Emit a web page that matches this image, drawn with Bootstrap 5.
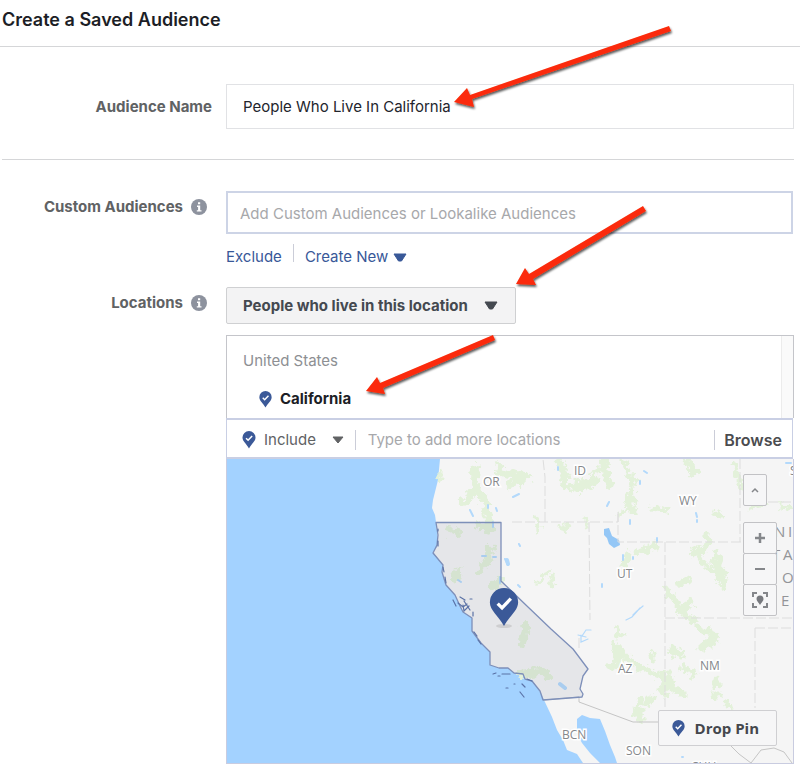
<!DOCTYPE html>
<html lang="en">
<head>
<meta charset="utf-8">
<meta name="viewport" content="width=device-width, initial-scale=1">
<title>Create a Saved Audience</title>
<link href="https://cdn.jsdelivr.net/npm/bootstrap@5.3.0/dist/css/bootstrap.min.css" rel="stylesheet">
<style>
body{font-family:Inter,"Liberation Sans",sans-serif;font-size:15px;line-height:24px;color:#1d2129;background:#fff}
.page-title{font-size:18px;line-height:24px;font-weight:600;padding:8px 2px 14px;border-bottom:1px solid #d5d6d8;color:#1c1e26}
.name-section{padding:37px 0 30px;margin:0 6px 0 2px;border-bottom:1px solid #d5d6d8}
.name-section .field-label{width:210px;margin-right:14px}
.field-row{margin-right:6px}
.custom-row{padding-top:31px}
.field-label{flex:none;text-align:right;font-weight:700;color:#606264}
.info-label{width:207px;margin-right:19px;padding-top:4px}
.field-box,.field-box:focus{border:1px solid #e1e2e5;border-radius:0;padding:10px 16px 9px;font-size:15px;line-height:24px;color:#23252d;background:#fff;box-shadow:none}
.field-blue,.field-blue:focus{border:2px solid #cdd4e6;padding:9px 12px 6px}
.custom-col{margin-right:1px}
.form-control::placeholder{color:#a7a8ab;opacity:1}
.links-line{padding-top:10px;margin-bottom:20px;gap:11px}
.link-blue,.link-blue:hover{color:#385898;text-decoration:none;line-height:20px;font-size:15px}
.links-line .link-blue{margin-top:3px}
.links-line .v-rule{height:18px;align-self:flex-start}
.v-rule{width:1px;background:#cbcdd8}
.pick{appearance:none;cursor:pointer;background-repeat:no-repeat}
.pick-type{border:1px solid #cfd0d2;border-radius:2px;font-weight:700;font-size:15px;line-height:24px;color:#444950;padding:6px 47px 5px 16px;margin-bottom:11px;background-color:#f3f3f4;background-position:right 17px center;background-size:14px 9px;background-image:url("data:image/svg+xml,%3Csvg xmlns='http://www.w3.org/2000/svg' viewBox='0 0 14 9'%3E%3Cpath d='M1 1h12L8.500 8h-3z' fill='%23444950' stroke='%23444950' stroke-linejoin='round'/%3E%3C/svg%3E")}
.pick-mode{border:0;background-color:transparent;font-size:15px;line-height:24px;color:#606264;padding:0 28px 0 0;background-position:right 0 center;background-size:12px 8px;background-image:url("data:image/svg+xml,%3Csvg xmlns='http://www.w3.org/2000/svg' viewBox='0 0 12 8'%3E%3Cpath d='M1 1h10L6 7z' fill='%23606264' stroke='%23606264' stroke-linejoin='round'/%3E%3C/svg%3E")}
.chosen{border:1px solid #c4c5ca;border-bottom:0}
.chosen-list{padding:13px 0 7px 16px}
.country{color:#8d8f93}
.state{font-weight:700;color:#1c1e26;margin-top:14px;padding-left:16px;gap:8px}
.scroll-track{width:12px;background:#fafafa;border-left:1px solid #ececec}
.adder{border:1px solid #c9cfe4;border-top-width:2px;border-bottom-width:2px;margin-right:1px;padding:8px 10px 5px 15px}
.adder .form-control{border:0;padding:0 12px;font-size:15px;line-height:24px;box-shadow:none;background:none}
.adder .v-rule{height:20px}
.adder .v-rule-first{margin-left:11px}
.browse-btn,.browse-btn:hover{font-weight:600;color:#4b4c4f;padding:0 0 0 10px;border:0;font-size:16px;line-height:24px}
.map-frame{border:1px solid #c9cce0;border-top:0;background:#a3d2ff}
.map-frame text{font-family:"Open Sans","Noto Sans",sans-serif;fill:#85878b;stroke:#fff;stroke-width:3px;paint-order:stroke;font-size:12px}
.map-frame .region-name{font-size:15px;stroke:none;fill:#929498}
.map-ui{inset:15px 16px 17px auto;pointer-events:none}
.map-ui button{pointer-events:auto}
.map-btn,.map-btn:hover{border:1px solid #c2c2c5;border-radius:2px;background:#f6f6f7;padding:0;width:34px;height:32px;color:#85878b}
.map-btn+.map-btn{margin-top:-1px}
.map-btn.narrow{width:24px;margin-right:10px;margin-bottom:17px}
.pin-btn,.pin-btn:hover{border:1px solid #cfcfd2;border-radius:2px;background:#f6f6f7;font:700 15px/24px "Open Sans","Noto Sans",sans-serif;color:#44474d;padding:5px 17px 5px 13px;gap:10px}
.callouts{left:0;top:0;z-index:5;pointer-events:none}
svg{flex:none}
</style>
</head>
<body class="position-relative">
<svg width="0" height="0" class="position-absolute" aria-hidden="true">
  <symbol id="pin" viewBox="0 0 30 40"><path d="M15 0a14.500 14.500 0 0 1 14.500 14.500C29.500 23 21 28 15 39 9 28 .5 23 .5 14.500A14.500 14.500 0 0 1 15 0z" fill="#3b5998"/><path d="M8.500 16l4.500 4.500 9-9.500" fill="none" stroke="#fff" stroke-width="3.400"/></symbol>
  <symbol id="info" viewBox="0 0 16 16"><circle cx="8" cy="8" r="8" fill="#8d929e"/><path d="M6 6.500h3.200v4.700h1.300v1.400H5.800v-1.400h1.300V7.900H6zM7 3.200h2.200v2.100H7z" fill="#fff"/></symbol>
</svg>

<header><h1 class="page-title mb-0">Create a Saved Audience</h1></header>
<main>
  <section class="name-section d-flex align-items-center">
    <label class="field-label" for="aud-name">Audience Name</label>
    <input id="aud-name" class="form-control field-box" type="text" value="People Who Live In California">
  </section>

  <section class="field-row custom-row d-flex">
    <div class="field-label info-label d-flex justify-content-end align-items-start">
      <label for="custom-aud">Custom Audiences</label>
      <svg class="ms-2 mt-1" width="16" height="16" aria-hidden="true"><use href="#info"/></svg>
    </div>
    <div class="flex-grow-1 custom-col">
      <input id="custom-aud" class="form-control field-box field-blue" type="text" placeholder="Add Custom Audiences or Lookalike Audiences">
      <div class="links-line d-flex">
        <a class="link-blue" href="#">Exclude</a>
        <span class="v-rule"></span>
        <button type="button" class="btn link-blue border-0 p-0">Create New <svg width="14" height="9" viewBox="0 0 14 9" aria-hidden="true"><path d="M1 1h12L8.500 8h-3z" fill="#385898" stroke="#385898" stroke-linejoin="round"/></svg></button>
      </div>
    </div>
  </section>

  <section class="field-row d-flex">
    <div class="field-label info-label d-flex justify-content-end align-items-start">
      <label for="loc-type">Locations</label>
      <svg class="ms-2 mt-1" width="16" height="16" aria-hidden="true"><use href="#info"/></svg>
    </div>
    <div class="flex-grow-1">
      <select id="loc-type" class="pick pick-type d-block"><option>People who live in this location</option></select>
      <div class="chosen d-flex">
        <div class="chosen-list flex-grow-1">
          <div class="country">United States</div>
          <div class="state d-flex align-items-center"><svg width="13" height="17" aria-hidden="true"><use href="#pin"/></svg>California</div>
        </div>
        <div class="scroll-track"></div>
      </div>
      <div class="adder d-flex align-items-center">
        <svg class="me-2" width="14" height="18" aria-hidden="true"><use href="#pin"/></svg>
        <select class="pick pick-mode" aria-label="Include or exclude"><option>Include</option></select>
        <span class="v-rule v-rule-first"></span>
        <input class="form-control" type="text" aria-label="Add locations" placeholder="Type to add more locations">
        <span class="v-rule"></span>
        <button type="button" class="btn browse-btn">Browse</button>
      </div>
      <div class="map-frame position-relative">
        <svg class="d-block w-100" viewBox="227 459 566 304" role="img" aria-label="Map of California">
          <defs>
            <filter id="rough" x="-5%" y="-5%" width="110%" height="110%"><feTurbulence type="fractalNoise" baseFrequency=".16" numOctaves="3" seed="4"/><feDisplacementMap in="SourceGraphic" scale="13" xChannelSelector="R" yChannelSelector="G"/></filter>
          </defs>
          <rect x="227" y="459" width="566" height="304" fill="#a3d2ff"/>
          <path fill="#f5f5f5" d="M440 459L438 480 433 500 432 508 435 515 436 522 438 540 437 547 433 552 443 565 442 572 446 585 455 595 460 606 463 612 472 618 472 631 481 643 490 652 490 665 499 668 508 668 514 673 523 674 525 679 532 680 541 693 544 700 552 717 557 730 563 740 567 750 577 754 583 763H600L590 753 582 743 577 734 577 719 582 715 590 718 600 719 605 731 610 745 615 757 617 763H793V459z"/>
          <g fill="none" stroke="#e3f1da" stroke-linecap="round" filter="url(#rough)">
            <path stroke-width="8" d="M476 467l-2 25-12 10M474 485l14 20M500 472l22 4M510 485l18-9M564 484l16 5 16-8M566 474l-8-12M487 511l1 10M603 462l6 22M634 480l-6 28M686 461l9 12"/>
            <path stroke-width="5" d="M440 472v6M503 471l-5-5M558 464l8 22 18-4 16-12M537 519l2 12M561 528l8-3M586 519v7M545 573l-6 10M552 576v8M624 463l8 20 3 20M652 508l14 2M715 513l7 4M618 515l18-6M735 465l6 22M750 508l15-4M782 506l8 2"/>
            <path stroke-width="8" d="M490 548l-2 12-8 10M450 530l9 2M480 526l12 3M458 571l-2 8M500 580l-6 6M526 625l-4 20M521 674l18-2M547 675l-6-4"/>
            <path stroke-width="7" d="M638 552l18-6M705 536l4 8-14 10M716 552l8 28M712 562l12 24M686 580l-6 4M666 590l12 14M690 604l-9 6M628 555l-4 8M696 550l9 16"/>
            <path stroke-width="7" d="M614 643l6 20-9 4M620 650l14 15 15 6 8 5M618 630l1 4M660 674l12 10-8 9M668 675l-6 13M684 668l9 6M675 690l8 3M698 628l18 8-14 12M708 630l6 16M672 650l10 4M716 680v5M714 695h3M727 703l4 5M641 700l-6 14M652 698l-5 6M680 612l14 8M640 712v6M652 654v3"/>
          </g>
          <g fill="none" stroke="#b3d9fb" stroke-width="2" stroke-linecap="round">
            <path d="M513 497l6-3M470 510l3 6M488 505v3M496 508l1 3M505 559l3 6M493 522v5M482 556h4M493 557h3M500 577v6M458 580l3 2M644 471l3 2M640 481v3M630 520v4M696 513l1 4M697 520v2M623 555v5M633 557v2M602 584v3M609 502l-2 4M657 538v4M558 467v3M518 585l2 2M786 463h5M519 544l1 2M682 757h1"/>
            <path stroke-width="1.200" d="M581 635v7l7-3M591 630h-5l-4 6M643 606l-6 5-4 4M640 608l-8 9-6 3M586 637l-8-2"/>
            <path stroke-width="4" d="M507 560l1 4M560 684l5 4"/>
          </g>
          <path fill="#94c7f6" d="M604 529l5-1 3 8 7 4 1 5-6 3-5-4-2-6-3-3z"/>
          <path fill="none" stroke="#ddd" d="M512 522h106v-10M545 522v-45l-2-18M589 522l1 98M618 512v30h126M665 542v165M665 618h128M740 459v83M755 628v80M579 648v-11M755 502h38M755 628h38" stroke-dasharray="10 3"/>
          <path fill="none" stroke="#c5c5c5" d="M544 700l35-3M579 697v5l54 20h32M729 744l10 10 12 9 10-13 13-2 10 4 8 11"/>
          <path fill="#303a68" fill-opacity=".08" stroke="#7d8fb9" stroke-width="1.300" stroke-linejoin="round" d="M436 522.500H501V581L528 607 551 629 573 649 588 669 583 676 580 689 583 694 582 697 543 700 540 691 532 681 525 679 523 674 514 673 508 668 499 668 490 665V652L481 643 472 631V618L463 612 460 606 455 595 446 585 442 572 443 565 433 553 437 545 438 535z"/>
          <g fill="none" stroke="#5b72a6" stroke-width="1.200" stroke-linecap="round">
            <path d="M438 529v2M438 541v5M443 567l1 5M445 577l1 6M453 600l3 6M460 597l5 3M458 603l5 4 4-3M470 599h2M463 605l1 6 5-5M464 601l6 9M473 612v4M474 632l3 4M478 640l3 4M493 674l3-1M498 676h2M502 674h8M506 688h2M514 684h1M522 684l3 3M520 692l4 5M527 679l5 2"/>
          </g>
          <ellipse cx="504" cy="626" rx="8" ry="2" fill="#999" opacity=".3"/>
          <use href="#pin" x="489" y="588" width="30" height="39"/>
          <text x="483" y="486">OR</text><text x="574" y="475">ID</text><text x="679" y="505">WY</text>
          <text x="617" y="578">UT</text><text x="618" y="673">AZ</text><text x="700" y="670">NM</text>
          <text x="562" y="739">BCN</text><text x="626" y="755">SON</text><text x="691" y="771">CHH</text>
          <text x="790" y="475">S</text>
          <text class="region-name" x="774" y="537">N</text><text class="region-name" x="788" y="537">I</text><text class="region-name" x="772" y="560">T</text><text class="region-name" x="783" y="560">A</text><text class="region-name" x="782" y="583">O</text><text class="region-name" x="781" y="606">E</text>
        </svg>
        <div class="map-ui position-absolute d-flex flex-column align-items-end">
          <button type="button" class="btn map-btn narrow d-flex align-items-center justify-content-center" aria-label="Collapse map"><svg width="8" height="6" viewBox="0 0 8 6"><path d="M1 5l3-3 3 3" fill="none" stroke="#85878b" stroke-width="1.500"/></svg></button>
          <button type="button" class="btn map-btn d-flex align-items-center justify-content-center" aria-label="Zoom in"><svg width="12" height="12" viewBox="0 0 12 12"><path d="M6 1v10M1 6h10" stroke="#85878b" stroke-width="2.500"/></svg></button>
          <button type="button" class="btn map-btn d-flex align-items-center justify-content-center" aria-label="Zoom out"><svg width="12" height="12" viewBox="0 0 12 12"><path d="M1 6h10" stroke="#85878b" stroke-width="2"/></svg></button>
          <button type="button" class="btn map-btn d-flex align-items-center justify-content-center" aria-label="Center on pin"><svg width="16" height="16" viewBox="0 0 16 16"><path d="M1 5V1h4M11 1h4v4M15 11v4h-4M5 15H1v-4" fill="none" stroke="#85878b" stroke-width="2"/><path d="M8 3.500a3.500 3.500 0 0 1 3.500 3.500C11.500 9.200 9 11 8 13 7 11 4.500 9.200 4.500 7A3.500 3.500 0 0 1 8 3.500z" fill="#77797e"/></svg></button>
          <button type="button" class="btn pin-btn mt-auto d-flex align-items-center"><svg width="13" height="17" aria-hidden="true"><use href="#pin"/></svg>Drop Pin</button>
        </div>
      </div>
    </div>
  </section>
</main>

<svg class="callouts position-absolute" width="700" height="420" viewBox="0 0 700 420" aria-hidden="true">
  <defs><filter id="drop" x="-5%" y="-5%" width="110%" height="115%"><feDropShadow dx="1" dy="2" stdDeviation="1" flood-opacity=".65"/></filter></defs>
  <g fill="#fb2a08" filter="url(#drop)">
    <path d="M454 102L467 88 470 95 669 26 671 31 472 99 474 107z"/>
    <path d="M516 284L525 268 529 274 643 206 646 211 533 279 536 285z"/>
    <path d="M366 391L377 377 380 383 493 335 495 340 383 388 385 394z"/>
  </g>
</svg>
<script src="https://cdn.jsdelivr.net/npm/bootstrap@5.3.0/dist/js/bootstrap.bundle.min.js"></script>
</body>
</html>
